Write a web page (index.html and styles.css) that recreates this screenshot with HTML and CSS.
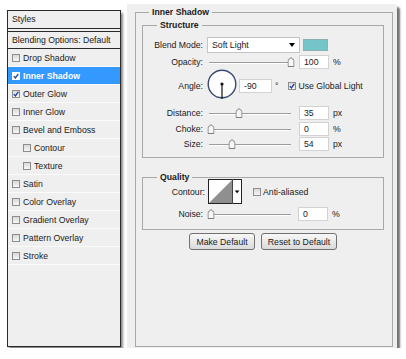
FILE: index.html
```html
<!DOCTYPE html>
<html lang="en">
<head>
    <meta charset="UTF-8">
    <title>Layer Style - Inner Shadow</title>
    <link rel="stylesheet" href="styles.css">
</head>
<body>
    <div class="dialog">
        <!-- Left: list of layer styles -->
        <div class="styles-panel">
            <div class="styles-head">Styles</div>
            <div class="styles-blend">Blending Options: Default</div>
            <ul class="style-list">
                <li><span class="check"></span>Drop Shadow</li>
                <li class="selected"><span class="check on"><svg viewBox="0 0 6 6"><path d="M0.8 3.1l1.6 1.8L5.3 0.9"/></svg></span>Inner Shadow</li>
                <li><span class="check on"><svg viewBox="0 0 6 6"><path d="M0.8 3.1l1.6 1.8L5.3 0.9"/></svg></span>Outer Glow</li>
                <li><span class="check"></span>Inner Glow</li>
                <li><span class="check"></span>Bevel and Emboss</li>
                <li class="sub"><span class="check"></span>Contour</li>
                <li class="sub"><span class="check"></span>Texture</li>
                <li><span class="check"></span>Satin</li>
                <li><span class="check"></span>Color Overlay</li>
                <li><span class="check"></span>Gradient Overlay</li>
                <li><span class="check"></span>Pattern Overlay</li>
                <li><span class="check"></span>Stroke</li>
            </ul>
        </div>

        <!-- Right: Inner Shadow settings -->
        <div class="settings-panel">
            <fieldset class="group outer">
                <legend>Inner Shadow</legend>

                <fieldset class="group structure">
                    <legend>Structure</legend>

                    <div class="row blend-row">
                        <span class="label">Blend Mode:</span>
                        <div class="select">Soft Light<span class="arrow"></span></div>
                        <span class="swatch"></span>
                    </div>

                    <div class="row">
                        <span class="label">Opacity:</span>
                        <div class="slider"><svg class="thumb" style="left: 100%" viewBox="0 0 7 10"><path d="M0.5 3.2L3.5 0.6L6.5 3.2V9.5H0.5Z"/></svg></div>
                        <span class="field">100</span>
                        <span class="unit">%</span>
                    </div>

                    <div class="row angle-row">
                        <span class="label">Angle:</span>
                        <svg class="dial" viewBox="0 0 30 30">
                            <circle cx="15" cy="15" r="13.8" fill="#fdfdfd" stroke="#3b4a73" stroke-width="1.4"/>
                            <line x1="15" y1="15" x2="15" y2="30" stroke="#111" stroke-width="1.2"/>
                            <circle cx="15" cy="15" r="1.6" fill="#111"/>
                        </svg>
                        <span class="field angle">-90</span>
                        <span class="deg">°</span>
                        <span class="check on global"><svg viewBox="0 0 6 6"><path d="M0.8 3.1l1.6 1.8L5.3 0.9"/></svg></span>
                        <span class="check-label">Use Global Light</span>
                    </div>

                    <div class="row distance-row">
                        <span class="label">Distance:</span>
                        <div class="slider"><svg class="thumb" style="left: 37%" viewBox="0 0 7 10"><path d="M0.5 3.2L3.5 0.6L6.5 3.2V9.5H0.5Z"/></svg></div>
                        <span class="field">35</span>
                        <span class="unit">px</span>
                    </div>

                    <div class="row">
                        <span class="label">Choke:</span>
                        <div class="slider"><svg class="thumb" style="left: 2%" viewBox="0 0 7 10"><path d="M0.5 3.2L3.5 0.6L6.5 3.2V9.5H0.5Z"/></svg></div>
                        <span class="field">0</span>
                        <span class="unit">%</span>
                    </div>

                    <div class="row size-row">
                        <span class="label">Size:</span>
                        <div class="slider"><svg class="thumb" style="left: 28%" viewBox="0 0 7 10"><path d="M0.5 3.2L3.5 0.6L6.5 3.2V9.5H0.5Z"/></svg></div>
                        <span class="field">54</span>
                        <span class="unit">px</span>
                    </div>
                </fieldset>

                <fieldset class="group quality">
                    <legend>Quality</legend>

                    <div class="row contour-row">
                        <span class="label wide">Contour:</span>
                        <svg class="contour" viewBox="0 0 34 25">
                            <rect x="0.5" y="0.5" width="33" height="24" fill="#fff" stroke="#222"/>
                            <path d="M1 24L24 1V24Z" fill="#8f8f8f"/>
                            <line x1="24.5" y1="0" x2="24.5" y2="25" stroke="#444"/>
                            <path d="M26.8 11.5h4.6l-2.3 2.8z" fill="#000"/>
                        </svg>
                        <span class="check anti"></span>
                        <span class="check-label">Anti-aliased</span>
                    </div>

                    <div class="row noise-row">
                        <span class="label">Noise:</span>
                        <div class="slider"><svg class="thumb" style="left: 2%" viewBox="0 0 7 10"><path d="M0.5 3.2L3.5 0.6L6.5 3.2V9.5H0.5Z"/></svg></div>
                        <span class="field">0</span>
                        <span class="unit">%</span>
                    </div>
                </fieldset>

                <div class="buttons">
                    <button class="make-default">Make Default</button>
                    <button class="reset-default">Reset to Default</button>
                </div>
            </fieldset>
        </div>
    </div>
</body>
</html>
```

FILE: styles.css
```css
* {
    box-sizing: border-box;
}

body {
    margin: 0;
    background: #ffffff;
    font-family: "Liberation Sans", Arial, sans-serif;
    font-size: 8.7px;
    color: #1a1a1a;
}

.dialog {
    display: flex;
    align-items: flex-start;
    padding: 4px 0 0 7px;
}

/* Styles list */
.styles-panel {
    width: 114px;
    height: 337px;
    margin-top: 6px;
    background: #efefef;
    border: 1px solid #2a2a2a;
    box-shadow: 2px 3px 2px rgba(0, 0, 0, 0.45);
}

.styles-head {
    height: 18px;
    line-height: 17px;
    padding-left: 4px;
    border-bottom: 1px solid #2a2a2a;
}

.styles-blend {
    height: 18px;
    line-height: 16px;
    margin-top: 2px;
    padding-left: 4px;
    border-top: 1px solid #2a2a2a;
    border-bottom: 1px solid #2a2a2a;
}

.style-list {
    list-style: none;
    margin: 0;
    padding: 0;
}

.style-list li {
    display: flex;
    align-items: center;
    height: 18px;
    padding-left: 4px;
    border-bottom: 1px solid #fbfbfb;
}

.style-list li.sub {
    padding-left: 15px;
}

.style-list li.selected {
    background: #3399ff;
    color: #ffffff;
    font-weight: bold;
}

.check {
    flex: none;
    display: inline-block;
    width: 8px;
    height: 8px;
    margin-right: 3px;
    border: 1px solid #8d8d8d;
    background: linear-gradient(#d9d9d9, #f7f7f7);
}

.check svg {
    display: block;
    width: 6px;
    height: 6px;
    fill: none;
    stroke: #1f3f9a;
    stroke-width: 1.3;
}

.selected .check {
    background: #ffffff;
    border-color: #ffffff;
}

/* Settings */
.settings-panel {
    width: 270px;
    height: 344px;
    margin-left: 6px;
    background: #efefef;
    border-radius: 0 3px 0 0;
    box-shadow: 3px 3px 2px rgba(0, 0, 0, 0.55);
}

.group {
    margin: 0;
    padding: 0;
    min-width: 0;
    border: 1px solid #a8a8a8;
}

.group legend {
    padding: 0 3px;
    font-weight: bold;
    line-height: 10px;
}

.outer {
    width: 258px;
    height: 340px;
    margin: 3px 0 0 8px;
    padding: 0 8px 0 6px;
}

.outer > legend {
    margin-left: 7px;
}

.structure {
    margin-top: 3px;
    padding: 7px 0 6px 0;
}

.structure > legend,
.quality > legend {
    margin-left: 14px;
}

.quality {
    margin-top: 14px;
    padding: 0 0 8px 0;
}

.row {
    display: flex;
    align-items: center;
    height: 14px;
    margin-top: 2px;
}

.label {
    flex: none;
    width: 60px;
    margin-right: 4px;
    text-align: right;
}

.label.wide {
    width: 62px;
    margin-right: 3px;
}

.blend-row {
    height: 16px;
    margin-top: 0;
}

.select {
    display: flex;
    align-items: center;
    width: 93px;
    height: 16px;
    padding-left: 4px;
    background: #ffffff;
    border: 1px solid #c4c4c4;
}

.arrow {
    margin-left: auto;
    margin-right: 4px;
    border-top: 4px solid #000;
    border-left: 3px solid transparent;
    border-right: 3px solid transparent;
}

.swatch {
    width: 25px;
    height: 12px;
    margin-left: 3px;
    background: #74c5c9;
    border: 1px solid #8fb0b2;
}

.slider {
    position: relative;
    flex: none;
    width: 82px;
    height: 10px;
    margin-left: 2px;
    margin-right: 8px;
}

.slider::before {
    content: "";
    position: absolute;
    left: 0;
    right: 0;
    top: 5px;
    border-top: 1px solid #9c9c9c;
    border-bottom: 1px solid #ffffff;
}

.thumb {
    position: absolute;
    top: 0;
    width: 7px;
    height: 10px;
    transform: translateX(-50%);
    fill: #f6f6f6;
    stroke: #7d7d7d;
    stroke-width: 1;
}

.field {
    flex: none;
    width: 30px;
    height: 14px;
    line-height: 12px;
    padding-left: 4px;
    background: #ffffff;
    border: 1px solid #d2d2d2;
}

.unit {
    margin-left: 4px;
}

.angle-row {
    height: 30px;
    margin-top: 0;
}

.dial {
    flex: none;
    width: 30px;
    height: 30px;
    margin-right: 2px;
}

.angle-row .label,
.angle-row .field,
.angle-row .deg,
.angle-row .check,
.angle-row .check-label {
    margin-top: 4px;
}

.field.angle {
    width: 33px;
}

.deg {
    margin-left: 3px;
}

.check.global {
    margin-left: 10px;
    margin-right: 2px;
}

.distance-row {
    margin-top: 7px;
}

.size-row {
    margin-top: 1px;
}

.contour-row {
    height: 25px;
    margin-top: -3px;
}

.contour {
    flex: none;
    width: 34px;
    height: 25px;
}

.check.anti {
    margin-left: 11px;
    margin-right: 2px;
}

.noise-row {
    margin-top: 3px;
}

.noise-row .slider {
    margin-right: 7px;
}

.buttons {
    display: flex;
    justify-content: center;
    gap: 6px;
    margin-top: 3px;
}

.buttons button {
    height: 17px;
    padding: 0;
    font-family: inherit;
    font-size: 8.7px;
    color: #1a1a1a;
    background: linear-gradient(#f8f8f8, #dadada);
    border: 1px solid #707070;
    border-radius: 3px;
}

.make-default {
    width: 66px;
}

.reset-default {
    width: 76px;
}
```
